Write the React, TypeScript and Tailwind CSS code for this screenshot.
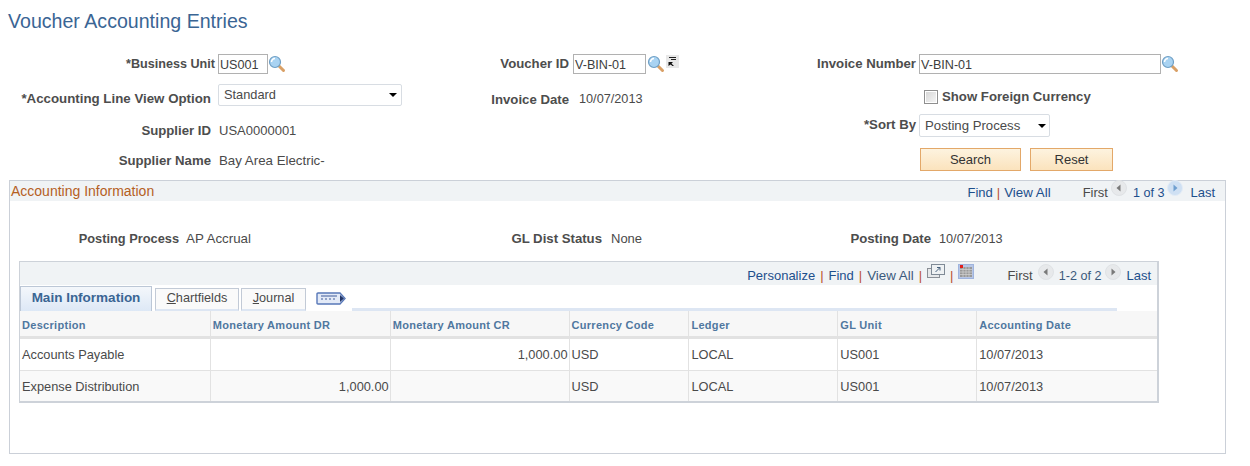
import React from "react";

const Lookup = () => (
  <svg width="18" height="18" viewBox="0 0 18 18" className="shrink-0">
    <path d="M10.5 10.5 L15.5 15.5" stroke="#d9a066" strokeWidth="3" strokeLinecap="round" />
    <circle cx="7" cy="7" r="5.5" fill="#a9d3f2" stroke="#6f9fc4" strokeWidth="1.2" />
    <path d="M3.5 7 A3.5 3.5 0 0 1 7 3.5" stroke="#ffffff" strokeWidth="1.5" fill="none" />
  </svg>
);

const Arrow = ({ dir, blue, cls }: { dir: "l" | "r"; blue?: boolean; cls: string }) => (
  <svg width="18" height="18" viewBox="0 0 18 18" className={`block shrink-0 ${cls}`}>
    <circle cx="9" cy="8" r="7.5" fill={blue ? "#cfe0f3" : "#e7e9eb"} stroke={blue ? "#e3ecf6" : "#dfe2e5"} />
    <path
      d={dir === "l" ? "M10.5 4.5 L6.5 8 L10.5 11.5 Z" : "M7.5 4.5 L11.5 8 L7.5 11.5 Z"}
      fill={blue ? "#6f9fd0" : "#7a7a7a"}
    />
  </svg>
);

const Caret = () => (
  <svg width="8" height="4" viewBox="0 0 8 4" className="shrink-0">
    <path d="M0 0 H8 L4 4 Z" fill="#000" />
  </svg>
);

const L = ({ w, children }: { w: string; children: React.ReactNode }) => (
  <span className={`${w} shrink-0 text-right font-bold text-[13.2px] text-[#4d4d4d]`}>{children}</span>
);

const inputCls = "h-[20px] border border-[#b1b1b1] bg-white pl-[1px] pt-[1px] text-[12.6px] leading-[18px] text-[#3d3d3d]";
const selectCls = "flex items-center justify-between rounded-[2px] border border-[#d8dde3] bg-white";
const btnCls = "h-[23px] border border-[#e3a869] bg-gradient-to-b from-[#fdf3df] to-[#fbe3bd] text-center text-[13px] leading-[21px] text-[#333]";
const Sep = () => <span className="text-[#b9512b]">|</span>;

const cols = [
  { h: "Description", w: "w-[191px]" },
  { h: "Monetary Amount DR", w: "w-[180px]" },
  { h: "Monetary Amount CR", w: "w-[179px]" },
  { h: "Currency Code", w: "w-[120px]" },
  { h: "Ledger", w: "w-[149px]" },
  { h: "GL Unit", w: "w-[139px]" },
  { h: "Accounting Date", w: "w-[180px]" },
];
const rows = [
  ["Accounts Payable", "", "1,000.00", "USD", "LOCAL", "US001", "10/07/2013"],
  ["Expense Distribution", "1,000.00", "", "USD", "LOCAL", "US001", "10/07/2013"],
];

export default function App() {
  return (
    <div className="w-[1250px] h-[466px] overflow-hidden bg-white pl-[9px] text-[13px] text-[#4a4a4a] font-['Liberation_Sans',Arial,sans-serif]">
      <h1 className="h-[53px] -ml-px pt-[9px] text-[19.6px] leading-[24px] text-[#3a6594]">Voucher Accounting Entries</h1>

      <div className="flex h-[127px] items-start">
        {/* Column 1 */}
        <div className="flex w-[393px] shrink-0 flex-col">
          <div className="flex h-[21px] items-center">
            <span className="w-[206px] shrink-0 pt-[1px] text-right text-[12.6px] font-bold text-[#4d4d4d]">*Business Unit</span>
            <span className={`${inputCls} ml-[3px] mt-[1px] w-[50px]`}>US001</span>
            <Lookup />
          </div>
          <div className="mt-[10px] flex h-[22px] items-center">
            <span className="w-[202px] shrink-0 pt-[8px] text-right text-[13.3px] font-bold text-[#4d4d4d]">*Accounting Line View Option</span>
            <div className={`${selectCls} ml-[7px] h-[22px] w-[184px] pl-[5px] pr-[4px] text-[12.8px]`}>
              <span>Standard</span>
              <Caret />
            </div>
          </div>
          <div className="mt-[17px] flex h-[16px] items-center">
            <L w="w-[202px]">Supplier ID</L>
            <span className="ml-[8px]">USA0000001</span>
          </div>
          <div className="mt-[14px] flex h-[16px] items-center">
            <L w="w-[202px]">Supplier Name</L>
            <span className="ml-[8px] text-[13.3px]">Bay Area Electric-</span>
          </div>
        </div>

        {/* Column 2 */}
        <div className="flex w-[346px] shrink-0 flex-col">
          <div className="flex h-[21px] items-center">
            <L w="w-[167px]">Voucher ID</L>
            <span className={`${inputCls} ml-[4px] mt-[1px] w-[73px]`}>V-BIN-01</span>
            <span className="ml-[1px]"><Lookup /></span>
            <svg width="13" height="13" viewBox="0 0 13 13" className="ml-[1px] mb-[4px] shrink-0">
              <rect width="13" height="13" fill="#e8e8e8" />
              <path d="M3 2.5 H10 M5 4.5 H10" stroke="#222" strokeWidth="1" />
              <path d="M2.5 7 L7 7 L5.5 8.5 L8 11 L6.5 11 L4.5 9.5 L2.5 11 Z" fill="#111" />
            </svg>
          </div>
          <div className="mt-[18px] flex h-[16px] items-center">
            <L w="w-[167px]">Invoice Date</L>
            <span className="ml-[10px] text-[12.7px]">10/07/2013</span>
          </div>
        </div>

        {/* Column 3 */}
        <div className="flex flex-col">
          <div className="flex h-[21px] items-center">
            <L w="w-[168px]">Invoice Number</L>
            <span className={`${inputCls} ml-[3px] mt-[1px] w-[242px]`}>V-BIN-01</span>
            <Lookup />
          </div>
          <div className="mt-[15px] flex h-[16px] items-center pl-[176px]">
            <span className="h-[14px] w-[14px] border border-[#8f8f8f] bg-gradient-to-br from-[#d4d4d4] to-[#f7f7f7] shadow-[inset_0_0_0_1px_#fff]" />
            <span className="ml-[4px] text-[13.2px] font-bold text-[#4d4d4d]">Show Foreign Currency</span>
          </div>
          <div className="mt-[8px] flex h-[24px] items-center">
            <L w="w-[168px]">*Sort By</L>
            <div className={`${selectCls} ml-[3px] h-[23px] w-[131px] pl-[5px] pr-[3px] pt-[1px] text-[13.2px]`}>
              <span>Posting Process</span>
              <Caret />
            </div>
          </div>
          <div className="mt-[11px] flex gap-[9px] pl-[172px]">
            <div className={`${btnCls} w-[101px]`}>Search</div>
            <div className={`${btnCls} w-[83px]`}>Reset</div>
          </div>
        </div>
      </div>

      {/* Accounting Information */}
      <div className="h-[274px] w-[1217px] border border-[#cbd0d8]">
        <div className="flex h-[20px] items-center justify-between bg-[#f0f3f5] pl-[1px] pr-[10px]">
          <span className="text-[14px] text-[#b5601f]">Accounting Information</span>
          <div className="flex items-center pt-[4px] text-[#1d4f8c]">
            <span>Find</span>
            <span className="mx-[4px]"><Sep /></span>
            <span className="text-[13.33px]">View All</span>
            <span className="ml-[32px] text-[#4a4a4a]">First</span>
            <Arrow dir="l" cls="ml-[2px] -mt-[8px]" />
            <span className="ml-[5px] text-[12.6px]">1 of 3</span>
            <Arrow dir="r" blue cls="ml-[2px] -mt-[8px]" />
            <span className="ml-[6px]">Last</span>
          </div>
        </div>

        <div className="flex h-[60px] items-center pt-[16px]">
          <span className="w-[169px] shrink-0 text-right text-[12.8px] font-bold text-[#4d4d4d]">Posting Process</span>
          <span className="ml-[7px] w-[241px] shrink-0 text-[13.33px]">AP Accrual</span>
          <L w="w-[175px]">GL Dist Status</L>
          <span className="ml-[9px] w-[228px] shrink-0">None</span>
          <L w="w-[92px]">Posting Date</L>
          <span className="ml-[8px] pt-[1px] text-[12.7px]">10/07/2013</span>
        </div>

        {/* Inner grid */}
        <div className="ml-[9px] w-[1140px] border-2 border-t border-[#cdd2d9] border-l-[1px]">
          <div className="flex h-[23px] items-center justify-end bg-[#f0f3f5] pr-[6px] pt-[5px] text-[#1d4f8c]">
            <span>Personalize</span>
            <span className="mx-[5px]"><Sep /></span>
            <span>Find</span>
            <span className="mx-[5px]"><Sep /></span>
            <span className="text-[13.33px] text-[#3b5a7c]">View All</span>
            <span className="mx-[5px]"><Sep /></span>
            <svg width="18" height="16" viewBox="0 0 18 16" className="-mt-[8px] block shrink-0">
              <rect x="0.5" y="4.5" width="12" height="9" fill="#e6e8ea" stroke="#8a8f96" />
              <rect x="4.5" y="0.5" width="13" height="10" fill="#eef1f3" stroke="#7f8a96" />
              <path d="M8.5 8 L13 3.5 M10 3.5 H13 V6.5" stroke="#46607c" fill="none" />
            </svg>
            <span className="mx-[5px]"><Sep /></span>
            <svg width="16" height="15" viewBox="0 0 16 15" className="-mt-[9px] block shrink-0">
              <rect x="0.5" y="0.5" width="15" height="14" fill="#b7c6e6" stroke="#9fb4de" />
              <rect x="2" y="3" width="12" height="10" fill="#999" />
              <path d="M2 5.5 H14 M2 8 H14 M2 10.5 H14 M5 3 V13 M8 3 V13 M11 3 V13" stroke="#d4d4d4" strokeWidth="0.7" />
              <rect x="2" y="1" width="3" height="3" fill="#e0201c" />
            </svg>
            <span className="ml-[33px] text-[#4a4a4a]">First</span>
            <Arrow dir="l" cls="ml-[4px] -mt-[6px]" />
            <span className="ml-[4px] text-[12.6px] text-[#3b5a7c]">1-2 of 2</span>
            <Arrow dir="r" cls="ml-[3px] -mt-[6px]" />
            <span className="ml-[4px]">Last</span>
          </div>

          <div className="flex h-[26px] items-end">
            <div className="flex h-[25px] w-[132px] items-center justify-center border border-b-0 border-[#bcc7d6] bg-gradient-to-b from-[#f4f7fb] to-[#dde8f6] pb-[2px] font-bold text-[13.5px] text-[#3a6594]">Main Information</div>
            <div className="ml-[3px] flex h-[23px] w-[84px] items-center justify-center border border-b-2 border-[#c2cad6] border-b-[#dde6f3] bg-[#fafafa] pb-[1px] text-[12.7px]"><span><u>C</u>hartfields</span></div>
            <div className="ml-[2px] flex h-[23px] w-[65px] items-center justify-center border border-b-2 border-[#c2cad6] border-b-[#dde6f3] bg-[#fafafa] pb-[1px] text-[12.7px]"><span><u>J</u>ournal</span></div>
            <div className="relative flex h-[24px] w-[20px] items-center pl-[10px] pb-[2px]">
              <svg width="30" height="13" viewBox="0 0 30 13" className="shrink-0">
                <path d="M1 2 Q1 1 2 1 H24 L29 6.5 L24 12 H2 Q1 12 1 11 Z" fill="#e3eaf7" stroke="#5878b8" strokeWidth="1.4" />
                <path d="M5 4 H21 M5 7 H7 M9 7 H11 M13 7 H15 M17 7 H19" stroke="#3f5a9a" />
                <path d="M24 3 L28 6.5 L24 10 Z" fill="#22366a" />
              </svg>
            </div>
            <div className="ml-[26px] h-[3px] w-[765px] bg-[#dde6f3]" />
          </div>

          <div className="flex h-[28px] border-b-[3px] border-[#e2e2e2] bg-[#f7f7f7]">
            {cols.map((c) => (
              <div key={c.h} className={`${c.w} flex items-center border-r border-[#e2e2e2] pl-[2px] pt-[4px] text-[11px] font-bold text-[#50779f] tracking-[0.3px] last:border-r-0`}>
                {c.h}
              </div>
            ))}
          </div>
          {rows.map((r, i) => (
            <div key={i} className={`flex text-[12.8px] ${i === 0 ? "h-[32px] bg-white border-b border-[#e2e2e2]" : "h-[30px] bg-[#f9f9f9]"}`}>
              {r.map((v, j) => (
                <div key={j} className={`${cols[j].w} flex items-center pt-[1px] ${j === 1 || j === 2 ? "justify-end pr-[1px]" : "pl-[2px]"} border-r border-[#e2e2e2] last:border-r-0`}>
                  {v}
                </div>
              ))}
            </div>
          ))}
        </div>
      </div>
    </div>
  );
}
